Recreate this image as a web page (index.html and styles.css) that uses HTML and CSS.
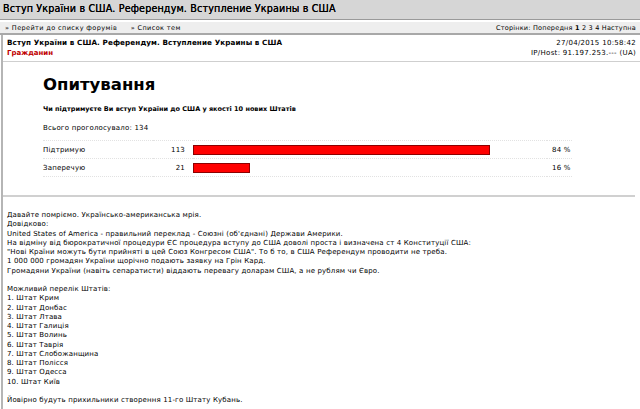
FILE: index.html
```html
<!DOCTYPE html>
<html lang="uk">
<head>
  <meta charset="UTF-8"/>
  <title>Вступ України в США. Референдум. Вступление Украины в США</title>
  <link rel="stylesheet" href="styles.css">
</head>
<body>
  <div class="titlebar">Вступ України в США. Референдум. Вступление Украины в США</div>

  <div class="navbar">
    <div class="nav-links">
      <a href="#">» Перейти до списку форумів</a>
      <a href="#">» Список тем</a>
    </div>
    <div class="pages">
      Сторінки: <a href="#">Попередня</a> <b>1</b> <a href="#">2</a> <a href="#">3</a> <a href="#">4</a> <a href="#">Наступна</a>
    </div>
  </div>

  <div class="page">
    <!-- post header -->
    <div class="post-head">
      <div>
        <div class="post-title">Вступ України в США. Референдум. Вступление Украины в США</div>
        <div class="author">Гражданин</div>
      </div>
      <div class="meta">
        <div>27/04/2015 10:58:42</div>
        <div>IP/Host: 91.197.253.--- (UA)</div>
      </div>
    </div>

    <!-- poll -->
    <div class="poll">
      <h1>Опитування</h1>
      <div class="question">Чи підтримуєте Ви вступ України до США у якості 10 нових Штатів</div>
      <div class="total">Всього проголосувало: 134</div>
      <table class="results">
        <tr>
          <td class="label">Підтримую</td>
          <td class="count">113</td>
          <td class="bar-cell"><div class="bar" style="width:84%"></div></td>
          <td class="pct">84 %</td>
        </tr>
        <tr>
          <td class="label">Заперечую</td>
          <td class="count">21</td>
          <td class="bar-cell"><div class="bar" style="width:16%"></div></td>
          <td class="pct">16 %</td>
        </tr>
      </table>
    </div>

    <!-- post body -->
    <div class="post-body">
      Давайте помріємо. Українсько-американська мрія.<br>
      Довідково:<br>
      United States of America - правильний переклад - Союзні (об'єднані) Держави Америки.<br>
      На відміну від бюрократичної процедури ЄС процедура вступу до США доволі проста і визначена ст 4 Конституції США:<br>
      "Нові Країни можуть бути прийняті в цей Союз Конгресом США". То б то, в США Референдум проводити не треба.<br>
      1 000 000 громадян України щорічно подають заявку на Грін Кард.<br>
      Громадяни України (навіть сепаратисти) віддають перевагу доларам США, а не рублям чи Євро.<br>
      <br>
      Можливий перелік Штатів:<br>
      1. Штат Крим<br>
      2. Штат Донбас<br>
      3. Штат Лтава<br>
      4. Штат Галиція<br>
      5. Штат Волинь<br>
      6. Штат Таврія<br>
      7. Штат Слобожанщина<br>
      8. Штат Полісся<br>
      9. Штат Одесса<br>
      10. Штат Київ<br>
      <br>
      Йовірно будуть прихильники створення 11-го Штату Кубань.
    </div>
  </div>
</body>
</html>
```

FILE: styles.css
```css
body { margin:0; font-family:"DejaVu Sans", Verdana, sans-serif; background:#fff; color:#000; }
a { color:#000; text-decoration:none; }

.titlebar {
  height:19px; line-height:18px;
  padding:0 3px;
  background:#d6d6d6; border-bottom:1px solid #9a9a9a;
  font-size:9.6px; letter-spacing:0.15px;
  text-shadow:0 0 0.4px #000;
}

.navbar {
  display:flex; justify-content:space-between; align-items:center;
  margin-top:1px; height:11px; padding:0 4px 0 5px;
  background:#eeeeee; border-top:1px solid #fff; border-bottom:2px solid #a8a8a8;
  font-size:6.5px; letter-spacing:0.4px;
}
.nav-links a { margin-right:11px; }
.pages { letter-spacing:0.2px; }

.page {
  border-left:2px solid #b5b5b5;
  margin-left:1px;
  min-height:380px;
}

.post-head {
  display:flex; justify-content:space-between;
  padding:3px 4px 3px 4px;
  border-bottom:1px solid #cfcfcf;
  font-size:7px; line-height:10px; letter-spacing:0.3px;
}
.post-title { font-weight:bold; font-size:7.2px; letter-spacing:0.1px; }
.author { color:#c00000; font-weight:bold; font-size:7px; letter-spacing:0; }
.meta { text-align:right; }

.poll { padding:13px 0 18px 40px; border-bottom:2px solid #d0d0d0; margin-right:5px; }
.poll h1 { margin:0 0 10px 0; font-size:16.5px; line-height:20px; }
.question { font-weight:bold; font-size:6.5px; margin-bottom:11px; }
.total { font-size:7px; margin-bottom:8px; letter-spacing:0.2px; }

.results { border-collapse:collapse; width:529px; font-size:7px; letter-spacing:0.2px; border-top:1px dotted #e2e2e2; }
.results td { height:17px; padding:0; border-bottom:1px dotted #e2e2e2; white-space:nowrap; }
.results .label { width:110px; }
.results .count { width:32px; text-align:right; padding-right:8px; }
.results .bar-cell { width:354px; }
.results .pct { width:20px; padding-left:5px; }
.bar { height:10px; background:#ff0000; border:1px solid #8c0000; box-sizing:border-box; }

.post-body { padding:14px 4px 11px 4px; font-size:7px; line-height:9.25px; letter-spacing:0.15px; }
```
